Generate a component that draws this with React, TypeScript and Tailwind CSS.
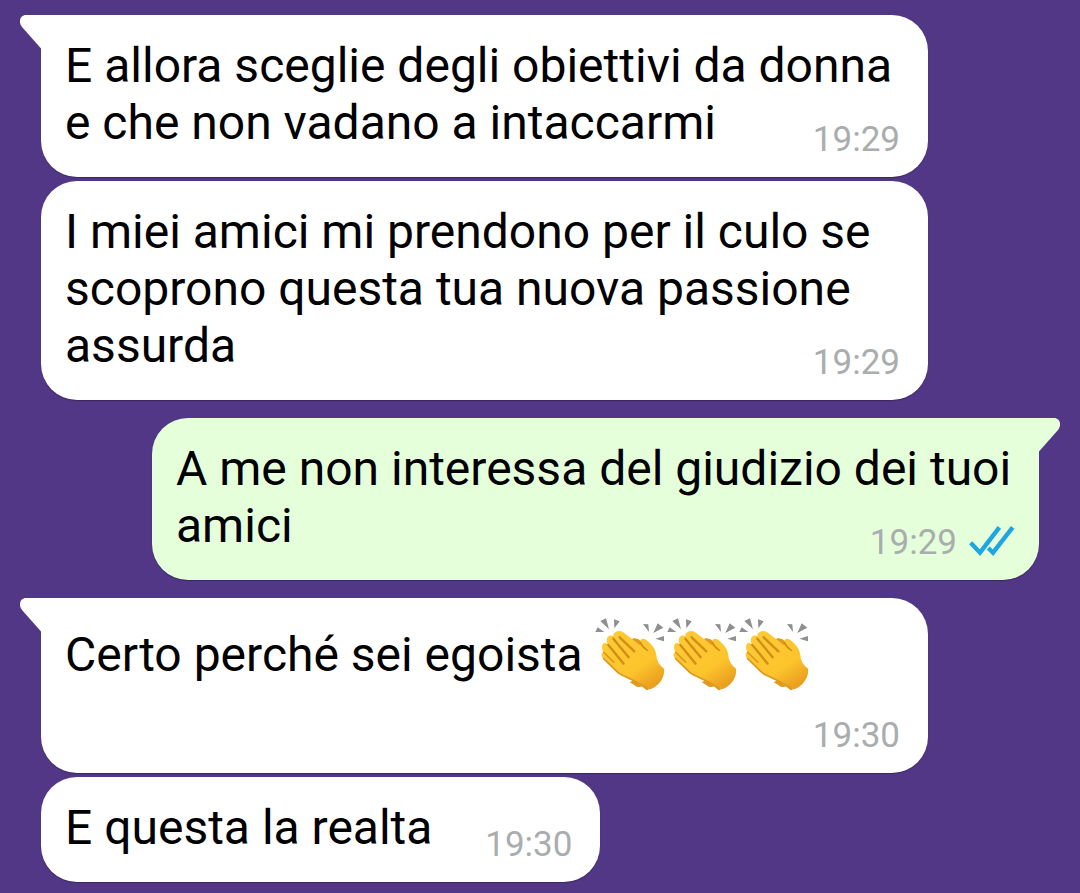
import type { ReactNode } from "react";

type BubbleProps = {
	time: string;
	children: ReactNode;
	sent?: boolean;
	tail?: boolean;
	className?: string;
	textClassName?: string;
};

function Tail({ sent }: { sent?: boolean }) {
	return (
		<svg
			viewBox="0 0 22 34"
			aria-hidden="true"
			className={
				sent
					? "absolute top-0 -right-[21px] w-[22px] h-[34px] -scale-x-100 text-[#e5ffdb]"
					: "absolute top-0 -left-[21px] w-[22px] h-[34px] text-white"
			}
		>
			<path d="M22 0H6C0 0-2 7 2 12L21 33.500h1z" fill="currentColor" />
		</svg>
	);
}

function ReadChecks() {
	return (
		<svg
			viewBox="0 0 138 90"
			className="w-[46px] h-[30px]"
			fill="none"
			stroke="#1fa6e1"
			strokeWidth="13"
			role="img"
			aria-label="Letto"
		>
			<path d="M5 50L33 80L91 4M58 66L72 80L131 4" />
		</svg>
	);
}

function Clap() {
	return (
		<svg
			viewBox="36 36 216 225"
			className="-mt-[3px] inline-block w-[72px] h-[75px] align-[-21px]"
			role="img"
			aria-label="Applauso"
		>
			<defs>
				<linearGradient id="palm" x1="0" y1="0" x2="0.7" y2="1">
					<stop offset="0" stopColor="#fecb38" />
					<stop offset="0.7" stopColor="#fdc42c" />
					<stop offset="1" stopColor="#e9a01f" />
				</linearGradient>
			</defs>
			<g fill="#8d8f90">
				<path d="M37 81L44 67L64 81ZM52 48L69 40L78 73ZM93 43L110 49L94 70Z" />
				<path d="M180 57L196 58L198 81ZM224 55L241 68L211 84ZM217 101L243 93V109Z" />
			</g>
			{/* back hand */}
			<path
				d="M148 101C156 98 166 101 173 108L180 140L140 120ZM140 232L152 226L178 244C168 249 158 245 154 240Z"
				fill="#df9b20"
			/>
			{/* front hand */}
			<path
				d="M94 84C101 76 114 76 123 83L170 120C173 121 175 119 172 112C169 103 180 97 189 104C207 118 217 130 220 150C222 166 226 178 243 191C246 208 236 229 222 241C211 251 200 255 191 254C181 245 164 235 145 225C128 217 117 212 105 203L60 160C54 153 54 145 61 141C56 132 55 120 63 114C67 113 71 114 74 117C69 108 71 98 77 94C83 90 90 92 94 96C90 92 90 88 94 84Z"
				fill="url(#palm)"
			/>
			<g fill="none" strokeLinecap="round" stroke="#d28d17" strokeWidth="7">
				<path d="M110 97L154 139M91 101L137 157M76 120L122 176" />
				<path d="M62 142L92 171" stroke="#dc991c" strokeWidth="5" />
				<path d="M172 112C176 122 184 130 193 136" strokeWidth="5" />
			</g>
			<path
				d="M62 161L105 203C122 216 168 228 192 253"
				fill="none"
				stroke="#dc981c"
				strokeWidth="5"
				strokeLinecap="round"
			/>
		</svg>
	);
}

function Bubble({
	time,
	children,
	sent,
	tail,
	className = "",
	textClassName = "",
}: BubbleProps) {
	return (
		<article
			className={`relative grid max-w-[887px] rounded-[36px] pt-[22px] pb-[26px] pl-6 shadow-[0_1px_1px_rgba(0,0,0,0.3)] ${
				sent ? "self-end bg-[#e5ffdb] pr-6" : "self-start bg-white pr-7"
			} ${tail ? (sent ? "rounded-tr-none" : "rounded-tl-none") : ""} ${className}`}
		>
			{tail && <Tail sent={sent} />}
			<p
				className={`col-start-1 row-start-1 text-[48px] leading-[57px] text-black ${textClassName}`}
			>
				{children}
			</p>
			<footer className="col-start-1 row-start-1 -mb-[10px] flex items-end gap-3 self-end justify-self-end text-[35px] leading-[42px] text-[#a9adae]">
				<time>{time}</time>
				{sent && (
					<span className="pb-2">
						<ReadChecks />
					</span>
				)}
			</footer>
		</article>
	);
}

export default function App() {
	return (
		<main className="flex min-h-screen flex-col bg-[#523787] px-[41px] pt-[15px] pb-2 font-['Roboto',sans-serif]">
			<Bubble time="19:29" tail>
				E allora sceglie degli obiettivi da donna e che non vadano a intaccarmi
			</Bubble>
			<Bubble time="19:29" className="mt-1">
				I miei amici mi prendono per il culo se scoprono questa tua nuova
				passione assurda
			</Bubble>
			<Bubble time="19:29" sent tail className="mt-[18px]">
				A me non interessa del giudizio dei tuoi amici
			</Bubble>
			<Bubble
				time="19:30"
				tail
				className="mt-[18px] w-full"
				textClassName="pb-[55px]"
			>
				Certo perché sei egoista <Clap />
				<Clap />
				<Clap />
			</Bubble>
			<Bubble time="19:30" className="mt-1" textClassName="pr-[140px]">
				E questa la realta
			</Bubble>
		</main>
	);
}
